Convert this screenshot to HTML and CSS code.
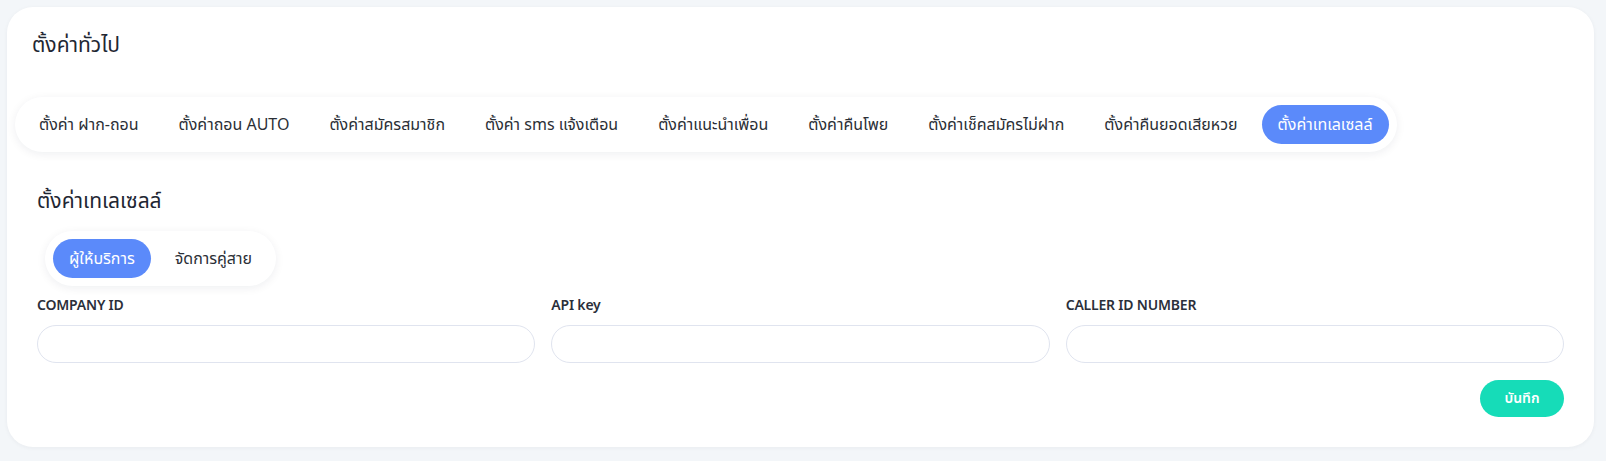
FILE: index.html
```html
<!DOCTYPE html>
<html lang="th">
<head>
<meta charset="utf-8">
<title>ตั้งค่าทั่วไป</title>
<link rel="stylesheet" href="styles.css">
</head>
<body>
<div class="page">
  <div class="card">
    <div class="card-header">
      <h1 class="title">ตั้งค่าทั่วไป</h1>
    </div>
    <nav class="tabs">
      <a class="tab">ตั้งค่า ฝาก-ถอน</a>
      <a class="tab">ตั้งค่าถอน AUTO</a>
      <a class="tab">ตั้งค่าสมัครสมาชิก</a>
      <a class="tab">ตั้งค่า sms แจ้งเตือน</a>
      <a class="tab">ตั้งค่าแนะนำเพื่อน</a>
      <a class="tab">ตั้งค่าคืนโพย</a>
      <a class="tab">ตั้งค่าเช็คสมัครไม่ฝาก</a>
      <a class="tab">ตั้งค่าคืนยอดเสียหวย</a>
      <a class="tab active">ตั้งค่าเทเลเซลล์</a>
    </nav>
    <div class="content">
      <h2 class="section-title">ตั้งค่าเทเลเซลล์</h2>
      <div class="subtabs">
        <a class="subtab active">ผู้ให้บริการ</a>
        <a class="subtab">จัดการคู่สาย</a>
      </div>
      <div class="fields">
        <div class="field">
          <label class="label">COMPANY ID</label>
          <input class="input" type="text">
        </div>
        <div class="field">
          <label class="label">API key</label>
          <input class="input" type="text">
        </div>
        <div class="field">
          <label class="label">CALLER ID NUMBER</label>
          <input class="input" type="text">
        </div>
      </div>
      <div class="actions">
        <button class="btn-save">บันทึก</button>
      </div>
    </div>
  </div>
</div>
</body>
</html>
```

FILE: styles.css
```css
* { box-sizing: border-box; }
html, body { margin: 0; padding: 0; }
body {
  background: #f3f6f9;
  font-family: "Noto Sans", "Noto Sans Thai", "Open Sans", sans-serif;
  color: #2b2f36;
}
.page {
  padding: 7px 12px 14px 7px;
}
.card {
  background: #ffffff;
  border-radius: 26px;
  height: 440px;
  box-shadow: 0 1px 4px rgba(30, 40, 60, 0.05);
  display: flex;
  flex-direction: column;
}
.card-header {
  padding: 22px 25px 0;
}
.title {
  margin: 0;
  font-size: 21px;
  line-height: 30px;
  font-weight: 400;
  color: #1f2733;
}
.tabs {
  margin: 38px 0 0 8px;
  align-self: flex-start;
  display: flex;
  gap: 8px;
  padding: 8px;
  background: #fff;
  border-radius: 28px;
  box-shadow: 0 2px 10px rgba(20, 30, 50, 0.07);
}
.tab {
  height: 39px;
  display: flex;
  align-items: center;
  padding: 0 16px;
  border-radius: 20px;
  font-size: 16px;
  color: #2b2f36;
  white-space: nowrap;
}
.tab.active {
  background: #5b8afa;
  color: #ffffff;
}
.content {
  padding: 0 30px 30px;
  display: flex;
  flex-direction: column;
}
.section-title {
  margin: 34px 0 0;
  font-size: 21px;
  line-height: 28px;
  font-weight: 400;
  color: #1f2733;
}
.subtabs {
  margin: 17px 0 0 8px;
  align-self: flex-start;
  display: flex;
  gap: 8px;
  padding: 8px;
  background: #fff;
  border-radius: 28px;
  box-shadow: 0 2px 10px rgba(20, 30, 50, 0.07);
}
.subtab {
  height: 39px;
  display: flex;
  align-items: center;
  padding: 0 16px;
  border-radius: 20px;
  font-size: 16px;
  color: #2b2f36;
  white-space: nowrap;
}
.subtab.active {
  background: #5b8afa;
  color: #fff;
}
.fields {
  margin-top: 8px;
  display: grid;
  grid-template-columns: repeat(3, 1fr);
  gap: 16px;
}
.field {
  display: flex;
  flex-direction: column;
}
.label {
  font-size: 14px;
  line-height: 21px;
  font-weight: 600;
  color: #2b2f3a;
  letter-spacing: -0.2px;
}
.input {
  margin-top: 10px;
  height: 38px;
  border: 1px solid #e0e4ef;
  border-radius: 19px;
  background: #fff;
  padding: 0 16px;
  font-family: inherit;
  font-size: 14px;
  outline: none;
}
.actions {
  margin-top: 17px;
  display: flex;
  justify-content: flex-end;
}
.btn-save {
  width: 84px;
  height: 37px;
  border: none;
  border-radius: 19px;
  background: #16dcb8;
  color: #fff;
  font-family: inherit;
  font-size: 14px;
  font-weight: 600;
  cursor: pointer;
}
```
